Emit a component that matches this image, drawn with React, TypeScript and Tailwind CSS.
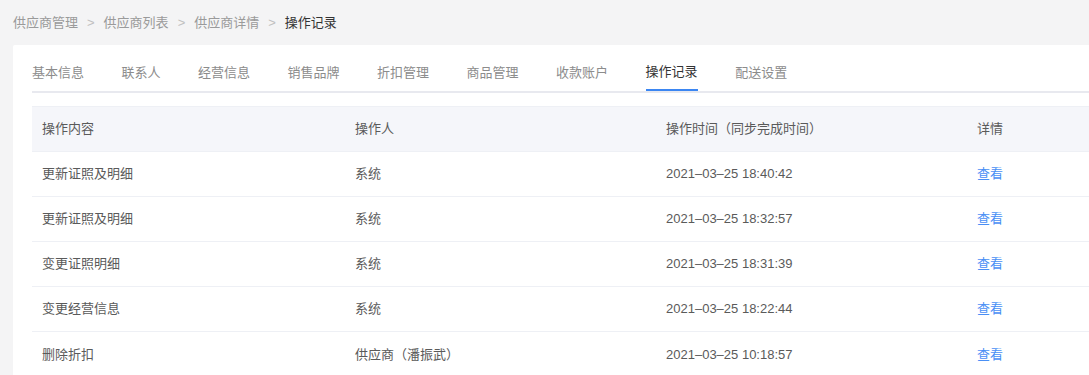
import React from "react";

const TABS = [
  "基本信息",
  "联系人",
  "经营信息",
  "销售品牌",
  "折扣管理",
  "商品管理",
  "收款账户",
  "操作记录",
  "配送设置",
];

const RECORDS = [
  { id: "1", content: "更新证照及明细", operator: "系统", time: "2021–03–25 18:40:42" },
  { id: "2", content: "更新证照及明细", operator: "系统", time: "2021–03–25 18:32:57" },
  { id: "3", content: "变更证照明细", operator: "系统", time: "2021–03–25 18:31:39" },
  { id: "4", content: "变更经营信息", operator: "系统", time: "2021–03–25 18:22:44" },
  { id: "5", content: "删除折扣", operator: "供应商（潘振武）", time: "2021–03–25 10:18:57" },
];

const BREADCRUMB = ["供应商管理", "供应商列表", "供应商详情"];

const App = () => {
  const [activeTab, setActiveTab] = React.useState("操作记录");

  return (
    <div
      className="w-[1089px] h-[375px] overflow-hidden bg-[#f4f4f5] text-[13px]"
      style={{ fontFamily: '"Liberation Sans", "Noto Sans CJK SC", sans-serif' }}
    >
      <div className="h-[45px] flex items-center px-[13px] text-[#9a9a9a]">
        {BREADCRUMB.map((item) => (
          <React.Fragment key={item}>
            <span>{item}</span>
            <span className="mx-[9px] text-[#c0c0c0]">&gt;</span>
          </React.Fragment>
        ))}
        <span className="text-[#333]">操作记录</span>
      </div>
      <div className="ml-[13px] w-[1120px] h-[400px] bg-white rounded-[2px] pt-[10px] pl-[19px]">
        <div className="flex border-b-2 border-[#e8e9ef]">
          {TABS.map((tab) => {
            const active = tab === activeTab;
            return (
              <div
                key={tab}
                onClick={() => setActiveTab(tab)}
                className={
                  active
                    ? "h-[36px] mr-[37.5px] flex items-center text-[#333] border-b-2 border-[#3b86f2] -mb-[2px] cursor-pointer"
                    : "h-[36px] mr-[37.5px] flex items-center text-[#8c8c8c] cursor-pointer"
                }
              >
                {tab}
              </div>
            );
          })}
        </div>
        <table className="mt-[13px] w-[1101px] table-fixed border-collapse text-[#5a5a5a]">
          <colgroup>
            <col className="w-[313px]" />
            <col className="w-[311px]" />
            <col className="w-[311px]" />
            <col />
          </colgroup>
          <thead>
            <tr className="h-[45px] bg-[#f5f6fa]">
              <th className="pl-[10px] text-left font-normal border-t border-[#eef0f5]">操作内容</th>
              <th className="pl-[10px] text-left font-normal border-t border-[#eef0f5]">操作人</th>
              <th className="pl-[10px] text-left font-normal border-t border-[#eef0f5]">操作时间（同步完成时间）</th>
              <th className="pl-[10px] text-left font-normal border-t border-[#eef0f5]">详情</th>
            </tr>
          </thead>
          <tbody>
            {RECORDS.map((record) => (
              <tr key={record.id} className="h-[45px] border-t border-[#eef0f5]">
                <td className="pl-[10px]">{record.content}</td>
                <td className="pl-[10px]">{record.operator}</td>
                <td className="pl-[10px]">{record.time}</td>
                <td className="pl-[10px]">
                  <span className="text-[#4a8ff5] cursor-pointer">查看</span>
                </td>
              </tr>
            ))}
          </tbody>
        </table>
      </div>
    </div>
  );
};

export default App;
